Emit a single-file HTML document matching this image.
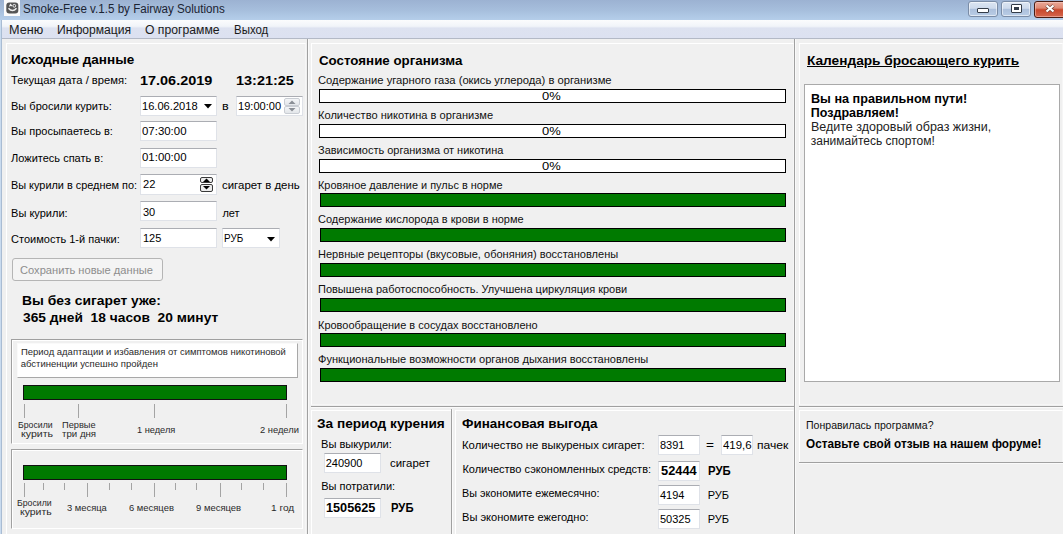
<!DOCTYPE html>
<html><head><meta charset="utf-8"><style>
html,body{margin:0;padding:0;}
body{width:1063px;height:534px;overflow:hidden;position:relative;background:#f0f0f0;font-family:"Liberation Sans",sans-serif;}
</style></head><body>
<div style="position:absolute;left:0;top:0;width:1063px;height:20px;background:linear-gradient(#9cb2d2,#a6bedc 50%,#b5ceea)"></div>
<div style="position:absolute;left:0;top:20px;width:2px;height:514px;background:#c9dbef"></div>
<div style="position:absolute;left:1px;top:20px;width:1px;height:514px;background:#a9bcd3"></div>
<div style="position:absolute;left:4px;top:0px;width:16px;height:16px;background:#fbfbfb"></div>
<svg style="position:absolute;left:6px;top:2px" width="13" height="12" viewBox="0 0 13 12">
<rect x="0.3" y="0.5" width="12" height="11" rx="3" fill="#555"/>
<path d="M2.5 6.2 Q6.5 10.8 10.5 6.2" stroke="#eee" stroke-width="1.5" fill="none"/>
<path d="M3.5 4.5 L4.5 2.5 L6 4" stroke="#eee" stroke-width="1.1" fill="none"/><circle cx="8.3" cy="3.8" r="1.4" fill="none" stroke="#eee" stroke-width="1"/>
</svg>
<div style="position:absolute;left:968px;top:1px;width:30px;height:16px;border:1px solid #7a8ca6;border-radius:3px;background:linear-gradient(#dbe5f2,#cddaec 45%,#acc0dc 52%,#b9cde6 100%);box-sizing:border-box;box-shadow:inset 0 0 0 1px rgba(255,255,255,0.55)"></div>
<div style="position:absolute;left:977px;top:8px;width:12px;height:5px;background:#fff;border:1px solid #333c48;border-radius:1px;box-sizing:border-box"></div>
<div style="position:absolute;left:1001px;top:1px;width:30px;height:16px;border:1px solid #7a8ca6;border-radius:3px;background:linear-gradient(#dbe5f2,#cddaec 45%,#acc0dc 52%,#b9cde6 100%);box-sizing:border-box;box-shadow:inset 0 0 0 1px rgba(255,255,255,0.55)"></div>
<div style="position:absolute;left:1011px;top:4px;width:11px;height:9px;background:#fff;border:1px solid #333c48;border-radius:1px;box-sizing:border-box"></div>
<div style="position:absolute;left:1014px;top:7px;width:5px;height:3px;background:#333c48"></div>
<div style="position:absolute;left:1034px;top:1px;width:40px;height:17px;border:1px solid #4a1c12;border-radius:3px;background:linear-gradient(#eaa898,#df8a74 40%,#c8482c 52%,#d4674e 100%);box-sizing:border-box;box-shadow:inset 0 0 0 1px rgba(255,220,210,0.45)"></div>
<svg style="position:absolute;left:1043px;top:3px" width="14" height="11" viewBox="0 0 14 11"><path d="M3.5 2.5 L10.5 8.5 M10.5 2.5 L3.5 8.5" stroke="#6a3a30" stroke-width="3.6"/><path d="M3.5 2.5 L10.5 8.5 M10.5 2.5 L3.5 8.5" stroke="#fff" stroke-width="2.3"/></svg>

<div style="position:absolute;left:2px;top:20px;width:1061px;height:18px;background:linear-gradient(#fbfcfd 0%,#f1f4f9 35%,#dde2f0 45%,#dce1f1 100%)"></div>
<div style="position:absolute;left:2px;top:38px;width:1061px;height:1px;background:#b3b9c6"></div>
<div style="position:absolute;left:6px;top:43px;width:300px;height:495px;border-top:1px solid #fff;border-left:1px solid #fff;border-right:1px solid #f6f6f6;border-bottom:1px solid #f6f6f6;box-sizing:border-box;background:#f0f0f0"></div>
<div style="position:absolute;left:311px;top:43px;width:483px;height:362px;border-top:1px solid #fff;border-left:1px solid #fff;border-right:1px solid #f6f6f6;border-bottom:1px solid #f6f6f6;box-sizing:border-box;background:#f0f0f0"></div>
<div style="position:absolute;left:311px;top:410px;width:141px;height:130px;border-top:1px solid #fff;border-left:1px solid #fff;border-right:1px solid #f6f6f6;border-bottom:1px solid #f6f6f6;box-sizing:border-box;background:#f0f0f0"></div>
<div style="position:absolute;left:455px;top:410px;width:339px;height:130px;border-top:1px solid #fff;border-left:1px solid #fff;border-right:1px solid #f6f6f6;border-bottom:1px solid #f6f6f6;box-sizing:border-box;background:#f0f0f0"></div>
<div style="position:absolute;left:799px;top:43px;width:264px;height:362px;border-top:1px solid #fff;border-left:1px solid #fff;border-right:1px solid #f6f6f6;border-bottom:1px solid #f6f6f6;box-sizing:border-box;background:#f0f0f0"></div>
<div style="position:absolute;left:799px;top:410px;width:264px;height:54px;border-top:1px solid #fff;border-left:1px solid #fff;border-right:1px solid #f6f6f6;border-bottom:1px solid #f6f6f6;box-sizing:border-box;background:#f0f0f0"></div>
<div style="position:absolute;left:799px;top:462px;width:264px;height:1px;background:#a0a0a0;box-shadow:0 1px #fafafa"></div>
<div style="position:absolute;left:307px;top:39px;width:1px;height:495px;background:#a0a0a0;box-shadow:1px 0 #fafafa"></div>
<div style="position:absolute;left:794px;top:39px;width:1px;height:495px;background:#a0a0a0;box-shadow:1px 0 #fafafa"></div>
<div style="position:absolute;left:311px;top:406px;width:483px;height:1px;background:#a0a0a0;box-shadow:0 1px #fafafa"></div>
<div style="position:absolute;left:799px;top:406px;width:264px;height:1px;background:#a0a0a0;box-shadow:0 1px #fafafa"></div>
<div style="position:absolute;left:451px;top:409px;width:1px;height:125px;background:#a0a0a0;box-shadow:1px 0 #fafafa"></div>
<div style="position:absolute;left:140px;top:96px;width:77px;height:20px;background:#fff;border:1px solid #dfe2e8;border-top-color:#abadb3;box-sizing:border-box"></div>
<svg style="position:absolute;left:204px;top:104px" width="9" height="5"><path d="M0 0 H8 L4 4.5 Z" fill="#000"/></svg>
<div style="position:absolute;left:236px;top:96px;width:67px;height:20px;background:#fff;border:1px solid #dfe2e8;border-top-color:#abadb3;box-sizing:border-box"></div>
<div style="position:absolute;left:284px;top:98px;width:16px;height:8px;border:1px solid #c9cdd3;box-sizing:border-box;background:linear-gradient(#f4f5f7,#e3e6ea);border-radius:2px"></div>
<div style="position:absolute;left:284px;top:106px;width:16px;height:8px;border:1px solid #c9cdd3;box-sizing:border-box;background:linear-gradient(#f4f5f7,#e3e6ea);border-radius:2px"></div>
<svg style="position:absolute;left:288px;top:99px" width="8" height="14"><path d="M0.5 5 L4 1.5 L7.5 5Z" fill="#8a8f96"/><path d="M0.5 9 L4 12.5 L7.5 9Z" fill="#8a8f96"/></svg>
<div style="position:absolute;left:140px;top:121px;width:77px;height:20px;background:#fff;border:1px solid #dfe2e8;border-top-color:#abadb3;box-sizing:border-box"></div>
<div style="position:absolute;left:140px;top:148px;width:77px;height:20px;background:#fff;border:1px solid #dfe2e8;border-top-color:#abadb3;box-sizing:border-box"></div>
<div style="position:absolute;left:140px;top:174px;width:77px;height:21px;background:#fff;border:1px solid #dfe2e8;border-top-color:#abadb3;box-sizing:border-box"></div>
<div style="position:absolute;left:200px;top:177px;width:13px;height:6px;border:1px solid #3a3a3a;box-sizing:border-box;border-radius:2px;background:#ececec"></div>
<div style="position:absolute;left:200px;top:184px;width:13px;height:8px;border:1px solid #3a3a3a;box-sizing:border-box;border-radius:2px;background:#ececec"></div>
<svg style="position:absolute;left:201px;top:177px" width="11" height="15"><path d="M2 5 L5.5 1.5 L9 5Z" fill="#000"/><path d="M2 9 L5.5 12.5 L9 9Z" fill="#000"/></svg>
<div style="position:absolute;left:140px;top:201px;width:77px;height:20px;background:#fff;border:1px solid #dfe2e8;border-top-color:#abadb3;box-sizing:border-box"></div>
<div style="position:absolute;left:140px;top:228px;width:77px;height:20px;background:#fff;border:1px solid #dfe2e8;border-top-color:#abadb3;box-sizing:border-box"></div>
<div style="position:absolute;left:222px;top:228px;width:58px;height:20px;background:#fff;border:1px solid #dfe2e8;border-top-color:#abadb3;box-sizing:border-box"></div>
<svg style="position:absolute;left:267px;top:237px" width="9" height="5"><path d="M0 0 H8 L4 4.5 Z" fill="#000"/></svg>
<div style="position:absolute;left:12px;top:258px;width:151px;height:23px;border:1px solid #b5b5b5;border-radius:3px;box-sizing:border-box;background:#f4f4f4"></div>
<div style="position:absolute;left:11px;top:339px;width:292px;height:105px;border:1px solid #a0a0a0;border-right-color:#fff;border-bottom-color:#fff;box-sizing:border-box;box-shadow:inset 1px 1px #fff"></div>
<div style="position:absolute;left:17px;top:343px;width:281px;height:35px;background:#fff;border:1px solid #a8a8a8;border-left-color:#fafafa;border-top-color:#fafafa;box-sizing:border-box"></div>
<div style="position:absolute;left:23px;top:385px;width:264px;height:15px;background:#007a00;border:1px solid #111;box-sizing:border-box"></div>
<div style="position:absolute;left:24px;top:404px;width:1px;height:14px;background:#a4a4a4"></div>
<div style="position:absolute;left:78px;top:404px;width:1px;height:14px;background:#a4a4a4"></div>
<div style="position:absolute;left:154px;top:404px;width:1px;height:14px;background:#a4a4a4"></div>
<div style="position:absolute;left:286px;top:404px;width:1px;height:14px;background:#a4a4a4"></div>
<div style="position:absolute;left:11px;top:449px;width:292px;height:80px;border:1px solid #a0a0a0;border-right-color:#fff;border-bottom-color:#fff;box-sizing:border-box;box-shadow:inset 1px 1px #fff"></div>
<div style="position:absolute;left:23px;top:465px;width:264px;height:15px;background:#007a00;border:1px solid #111;box-sizing:border-box"></div>
<div style="position:absolute;left:24px;top:483px;width:1px;height:14px;background:#a4a4a4"></div>
<div style="position:absolute;left:87px;top:483px;width:1px;height:14px;background:#a4a4a4"></div>
<div style="position:absolute;left:154px;top:483px;width:1px;height:14px;background:#a4a4a4"></div>
<div style="position:absolute;left:220px;top:483px;width:1px;height:14px;background:#a4a4a4"></div>
<div style="position:absolute;left:286px;top:483px;width:1px;height:14px;background:#a4a4a4"></div>
<div style="position:absolute;left:43px;top:483px;width:1px;height:7px;background:#a4a4a4"></div>
<div style="position:absolute;left:64px;top:483px;width:1px;height:7px;background:#a4a4a4"></div>
<div style="position:absolute;left:109px;top:483px;width:1px;height:7px;background:#a4a4a4"></div>
<div style="position:absolute;left:131px;top:483px;width:1px;height:7px;background:#a4a4a4"></div>
<div style="position:absolute;left:175px;top:483px;width:1px;height:7px;background:#a4a4a4"></div>
<div style="position:absolute;left:196px;top:483px;width:1px;height:7px;background:#a4a4a4"></div>
<div style="position:absolute;left:241px;top:483px;width:1px;height:7px;background:#a4a4a4"></div>
<div style="position:absolute;left:263px;top:483px;width:1px;height:7px;background:#a4a4a4"></div>
<div style="position:absolute;left:319px;top:89px;width:467px;height:14px;background:#fff;border:1px solid #000;box-sizing:border-box"></div>
<div style="position:absolute;left:319px;top:124px;width:467px;height:14px;background:#fff;border:1px solid #000;box-sizing:border-box"></div>
<div style="position:absolute;left:319px;top:159px;width:467px;height:14px;background:#fff;border:1px solid #000;box-sizing:border-box"></div>
<div style="position:absolute;left:320px;top:193px;width:466px;height:14px;background:#007a00;border:1px solid #000;box-sizing:border-box"></div>
<div style="position:absolute;left:320px;top:228px;width:466px;height:14px;background:#007a00;border:1px solid #000;box-sizing:border-box"></div>
<div style="position:absolute;left:320px;top:263px;width:466px;height:14px;background:#007a00;border:1px solid #000;box-sizing:border-box"></div>
<div style="position:absolute;left:320px;top:298px;width:466px;height:14px;background:#007a00;border:1px solid #000;box-sizing:border-box"></div>
<div style="position:absolute;left:320px;top:333px;width:466px;height:14px;background:#007a00;border:1px solid #000;box-sizing:border-box"></div>
<div style="position:absolute;left:320px;top:368px;width:466px;height:14px;background:#007a00;border:1px solid #000;box-sizing:border-box"></div>
<div style="position:absolute;left:324px;top:453px;width:57px;height:20px;background:#fff;border:1px solid #dfe2e8;border-top-color:#abadb3;box-sizing:border-box"></div>
<div style="position:absolute;left:324px;top:498px;width:57px;height:20px;background:#fff;border:1px solid #dfe2e8;border-top-color:#abadb3;box-sizing:border-box"></div>
<div style="position:absolute;left:658px;top:435px;width:42px;height:20px;background:#fff;border:1px solid #dfe2e8;border-top-color:#abadb3;box-sizing:border-box"></div>
<div style="position:absolute;left:721px;top:435px;width:32px;height:20px;background:#fff;border:1px solid #dfe2e8;border-top-color:#abadb3;box-sizing:border-box"></div>
<div style="position:absolute;left:658px;top:461px;width:42px;height:20px;background:#fff;border:1px solid #dfe2e8;border-top-color:#abadb3;box-sizing:border-box"></div>
<div style="position:absolute;left:658px;top:485px;width:42px;height:20px;background:#fff;border:1px solid #dfe2e8;border-top-color:#abadb3;box-sizing:border-box"></div>
<div style="position:absolute;left:658px;top:509px;width:42px;height:20px;background:#fff;border:1px solid #dfe2e8;border-top-color:#abadb3;box-sizing:border-box"></div>
<div style="position:absolute;left:804px;top:84px;width:256px;height:298px;background:#fff;border:1px solid #a9a9a9;box-sizing:border-box"></div>
<span id="t0" style="position:absolute;left:23.4px;top:3.00px;font-size:12px;line-height:12px;font-weight:normal;color:#1b2433;white-space:nowrap;transform:scaleX(0.9677);transform-origin:0 0;">Smoke-Free v.1.5 by Fairway Solutions</span>
<span id="t1" style="position:absolute;left:9.2px;top:24.00px;font-size:12px;line-height:12px;font-weight:normal;color:#1a1a1a;white-space:nowrap;transform:scaleX(1.0543);transform-origin:0 0;">Меню</span>
<span id="t2" style="position:absolute;left:56.9px;top:24.00px;font-size:12px;line-height:12px;font-weight:normal;color:#1a1a1a;white-space:nowrap;transform:scaleX(1.0084);transform-origin:0 0;">Информация</span>
<span id="t3" style="position:absolute;left:145.4px;top:24.00px;font-size:12px;line-height:12px;font-weight:normal;color:#1a1a1a;white-space:nowrap;transform:scaleX(1.0160);transform-origin:0 0;">О программе</span>
<span id="t4" style="position:absolute;left:234.0px;top:24.00px;font-size:12px;line-height:12px;font-weight:normal;color:#1a1a1a;white-space:nowrap;transform:scaleX(0.9553);transform-origin:0 0;">Выход</span>
<span id="t5" style="position:absolute;left:11.4px;top:53.00px;font-size:13px;line-height:13px;font-weight:bold;color:#000;white-space:nowrap;transform:scaleX(1.0383);transform-origin:0 0;">Исходные данные</span>
<span id="t6" style="position:absolute;left:11.4px;top:75.00px;font-size:11px;line-height:11px;font-weight:normal;color:#000;white-space:nowrap;transform:scaleX(1.0193);transform-origin:0 0;">Текущая дата / время:</span>
<span id="t7" style="position:absolute;left:139.9px;top:74.00px;font-size:13px;line-height:13px;font-weight:bold;color:#000;white-space:nowrap;transform:scaleX(1.1110);transform-origin:0 0;">17.06.2019</span>
<span id="t8" style="position:absolute;left:236.3px;top:74.00px;font-size:13px;line-height:13px;font-weight:bold;color:#000;white-space:nowrap;transform:scaleX(1.1125);transform-origin:0 0;">13:21:25</span>
<span id="t9" style="position:absolute;left:11.4px;top:101.00px;font-size:11px;line-height:11px;font-weight:normal;color:#000;white-space:nowrap;transform:scaleX(1.0040);transform-origin:0 0;">Вы бросили курить:</span>
<span id="t10" style="position:absolute;left:142.4px;top:101.00px;font-size:11px;line-height:11px;font-weight:normal;color:#000;white-space:nowrap;transform:scaleX(1.0098);transform-origin:0 0;">16.06.2018</span>
<span id="t11" style="position:absolute;left:221.9px;top:101.00px;font-size:11px;line-height:11px;font-weight:normal;color:#000;white-space:nowrap;transform:scaleX(1.1465);transform-origin:0 0;">в</span>
<span id="t12" style="position:absolute;left:238.3px;top:101.00px;font-size:11px;line-height:11px;font-weight:normal;color:#000;white-space:nowrap;transform:scaleX(1.0063);transform-origin:0 0;">19:00:00</span>
<span id="t13" style="position:absolute;left:11.1px;top:126.00px;font-size:11px;line-height:11px;font-weight:normal;color:#000;white-space:nowrap;transform:scaleX(0.9985);transform-origin:0 0;">Вы просыпаетесь в:</span>
<span id="t14" style="position:absolute;left:142.1px;top:126.00px;font-size:11px;line-height:11px;font-weight:normal;color:#000;white-space:nowrap;transform:scaleX(1.0390);transform-origin:0 0;">07:30:00</span>
<span id="t15" style="position:absolute;left:11.1px;top:153.00px;font-size:11px;line-height:11px;font-weight:normal;color:#000;white-space:nowrap;">Ложитесь спать в:</span>
<span id="t16" style="position:absolute;left:142.1px;top:152.00px;font-size:11px;line-height:11px;font-weight:normal;color:#000;white-space:nowrap;transform:scaleX(1.0390);transform-origin:0 0;">01:00:00</span>
<span id="t17" style="position:absolute;left:11.1px;top:180.00px;font-size:11px;line-height:11px;font-weight:normal;color:#000;white-space:nowrap;transform:scaleX(0.9902);transform-origin:0 0;">Вы курили в среднем по:</span>
<span id="t18" style="position:absolute;left:142.9px;top:179.00px;font-size:11px;line-height:11px;font-weight:normal;color:#000;white-space:nowrap;transform:scaleX(1.0122);transform-origin:0 0;">22</span>
<span id="t19" style="position:absolute;left:222.4px;top:180.00px;font-size:11px;line-height:11px;font-weight:normal;color:#000;white-space:nowrap;transform:scaleX(1.0395);transform-origin:0 0;">сигарет в день</span>
<span id="t20" style="position:absolute;left:11.1px;top:208.00px;font-size:11px;line-height:11px;font-weight:normal;color:#000;white-space:nowrap;">Вы курили:</span>
<span id="t21" style="position:absolute;left:142.9px;top:207.00px;font-size:11px;line-height:11px;font-weight:normal;color:#000;white-space:nowrap;">30</span>
<span id="t22" style="position:absolute;left:222.4px;top:208.00px;font-size:11px;line-height:11px;font-weight:normal;color:#000;white-space:nowrap;">лет</span>
<span id="t23" style="position:absolute;left:11.1px;top:234.00px;font-size:11px;line-height:11px;font-weight:normal;color:#000;white-space:nowrap;">Стоимость 1-й пачки:</span>
<span id="t24" style="position:absolute;left:142.9px;top:233.00px;font-size:11px;line-height:11px;font-weight:normal;color:#000;white-space:nowrap;">125</span>
<span id="t25" style="position:absolute;left:224.4px;top:233.00px;font-size:11px;line-height:11px;font-weight:normal;color:#000;white-space:nowrap;transform:scaleX(0.9009);transform-origin:0 0;">РУБ</span>
<span id="t26" style="position:absolute;left:19.8px;top:265.00px;font-size:11px;line-height:11px;font-weight:normal;color:#8d8d8d;white-space:nowrap;transform:scaleX(1.0110);transform-origin:0 0;">Сохранить новые данные</span>
<span id="t27" style="position:absolute;left:22.1px;top:294.00px;font-size:13px;line-height:13px;font-weight:bold;color:#000;white-space:nowrap;transform:scaleX(1.0662);transform-origin:0 0;">Вы без сигарет уже:</span>
<span id="t28" style="position:absolute;left:22.7px;top:311.00px;font-size:13px;line-height:13px;font-weight:bold;color:#000;white-space:nowrap;transform:scaleX(1.0587);transform-origin:0 0;">365 дней&nbsp; 18 часов&nbsp; 20 минут</span>
<span id="t29" style="position:absolute;left:20.7px;top:347.00px;font-size:9.5px;line-height:9.5px;font-weight:normal;color:#2a2a2a;white-space:nowrap;transform:scaleX(0.9963);transform-origin:0 0;">Период адаптации и избавления от симптомов никотиновой</span>
<span id="t30" style="position:absolute;left:20.7px;top:359.00px;font-size:9.5px;line-height:9.5px;font-weight:normal;color:#2a2a2a;white-space:nowrap;">абстиненции успешно пройден</span>
<span id="t31" style="position:absolute;left:17.9px;top:420.00px;font-size:9.5px;line-height:9.5px;font-weight:normal;color:#2a2a2a;white-space:nowrap;transform:scaleX(0.9173);transform-origin:0 0;">Бросили</span>
<span id="t32" style="position:absolute;left:20.5px;top:429.00px;font-size:9.5px;line-height:9.5px;font-weight:normal;color:#2a2a2a;white-space:nowrap;transform:scaleX(1.1112);transform-origin:0 0;">курить</span>
<span id="t33" style="position:absolute;left:62.1px;top:420.00px;font-size:9.5px;line-height:9.5px;font-weight:normal;color:#2a2a2a;white-space:nowrap;transform:scaleX(0.9722);transform-origin:0 0;">Первые</span>
<span id="t34" style="position:absolute;left:61.6px;top:429.00px;font-size:9.5px;line-height:9.5px;font-weight:normal;color:#2a2a2a;white-space:nowrap;transform:scaleX(1.0174);transform-origin:0 0;">три дня</span>
<span id="t35" style="position:absolute;left:136.9px;top:425.00px;font-size:9.5px;line-height:9.5px;font-weight:normal;color:#2a2a2a;white-space:nowrap;transform:scaleX(0.9708);transform-origin:0 0;">1 неделя</span>
<span id="t36" style="position:absolute;left:259.7px;top:425.00px;font-size:9.5px;line-height:9.5px;font-weight:normal;color:#2a2a2a;white-space:nowrap;transform:scaleX(0.9821);transform-origin:0 0;">2 недели</span>
<span id="t37" style="position:absolute;left:16.9px;top:498.00px;font-size:9.5px;line-height:9.5px;font-weight:normal;color:#2a2a2a;white-space:nowrap;transform:scaleX(0.9200);transform-origin:0 0;">Бросили</span>
<span id="t38" style="position:absolute;left:19.9px;top:507.00px;font-size:9.5px;line-height:9.5px;font-weight:normal;color:#2a2a2a;white-space:nowrap;transform:scaleX(1.1008);transform-origin:0 0;">курить</span>
<span id="t39" style="position:absolute;left:66.6px;top:503.00px;font-size:9.5px;line-height:9.5px;font-weight:normal;color:#2a2a2a;white-space:nowrap;transform:scaleX(0.9861);transform-origin:0 0;">3 месяца</span>
<span id="t40" style="position:absolute;left:129.4px;top:503.00px;font-size:9.5px;line-height:9.5px;font-weight:normal;color:#2a2a2a;white-space:nowrap;transform:scaleX(0.9912);transform-origin:0 0;">6 месяцев</span>
<span id="t41" style="position:absolute;left:196.1px;top:503.00px;font-size:9.5px;line-height:9.5px;font-weight:normal;color:#2a2a2a;white-space:nowrap;transform:scaleX(0.9957);transform-origin:0 0;">9 месяцев</span>
<span id="t42" style="position:absolute;left:271.4px;top:503.00px;font-size:9.5px;line-height:9.5px;font-weight:normal;color:#2a2a2a;white-space:nowrap;transform:scaleX(1.0636);transform-origin:0 0;">1 год</span>
<span id="t43" style="position:absolute;left:318.5px;top:54.00px;font-size:13px;line-height:13px;font-weight:bold;color:#000;white-space:nowrap;transform:scaleX(1.0249);transform-origin:0 0;">Состояние организма</span>
<span id="t44" style="position:absolute;left:318.4px;top:75.00px;font-size:11px;line-height:11px;font-weight:normal;color:#111;white-space:nowrap;transform:scaleX(1.0194);transform-origin:0 0;">Содержание угарного газа (окись углерода) в организме</span>
<span id="t45" style="position:absolute;left:541.7px;top:91.00px;font-size:11.5px;line-height:11.5px;font-weight:normal;color:#000;white-space:nowrap;transform:scaleX(1.1248);transform-origin:0 0;">0%</span>
<span id="t46" style="position:absolute;left:318.4px;top:110.00px;font-size:11px;line-height:11px;font-weight:normal;color:#111;white-space:nowrap;transform:scaleX(1.0089);transform-origin:0 0;">Количество никотина в организме</span>
<span id="t47" style="position:absolute;left:541.7px;top:126.00px;font-size:11.5px;line-height:11.5px;font-weight:normal;color:#000;white-space:nowrap;transform:scaleX(1.1248);transform-origin:0 0;">0%</span>
<span id="t48" style="position:absolute;left:318.4px;top:145.00px;font-size:11px;line-height:11px;font-weight:normal;color:#111;white-space:nowrap;transform:scaleX(0.9973);transform-origin:0 0;">Зависимость организма от никотина</span>
<span id="t49" style="position:absolute;left:541.7px;top:161.00px;font-size:11.5px;line-height:11.5px;font-weight:normal;color:#000;white-space:nowrap;transform:scaleX(1.1248);transform-origin:0 0;">0%</span>
<span id="t50" style="position:absolute;left:318.4px;top:180.00px;font-size:11px;line-height:11px;font-weight:normal;color:#111;white-space:nowrap;transform:scaleX(0.9932);transform-origin:0 0;">Кровяное давление и пульс в норме</span>
<span id="t51" style="position:absolute;left:318.4px;top:214.00px;font-size:11px;line-height:11px;font-weight:normal;color:#111;white-space:nowrap;transform:scaleX(0.9984);transform-origin:0 0;">Содержание кислорода в крови в норме</span>
<span id="t52" style="position:absolute;left:318.4px;top:249.00px;font-size:11px;line-height:11px;font-weight:normal;color:#111;white-space:nowrap;transform:scaleX(1.0042);transform-origin:0 0;">Нервные рецепторы (вкусовые, обоняния) восстановлены</span>
<span id="t53" style="position:absolute;left:318.4px;top:284.00px;font-size:11px;line-height:11px;font-weight:normal;color:#111;white-space:nowrap;transform:scaleX(0.9996);transform-origin:0 0;">Повышена работоспособность. Улучшена циркуляция крови</span>
<span id="t54" style="position:absolute;left:318.4px;top:320.00px;font-size:11px;line-height:11px;font-weight:normal;color:#111;white-space:nowrap;transform:scaleX(0.9971);transform-origin:0 0;">Кровообращение в сосудах восстановлено</span>
<span id="t55" style="position:absolute;left:318.4px;top:354.00px;font-size:11px;line-height:11px;font-weight:normal;color:#111;white-space:nowrap;transform:scaleX(1.0041);transform-origin:0 0;">Функциональные возможности органов дыхания восстановлены</span>
<span id="t56" style="position:absolute;left:317.3px;top:417.00px;font-size:13px;line-height:13px;font-weight:bold;color:#000;white-space:nowrap;transform:scaleX(1.0492);transform-origin:0 0;">За период курения</span>
<span id="t57" style="position:absolute;left:321.2px;top:439.00px;font-size:11px;line-height:11px;font-weight:normal;color:#000;white-space:nowrap;transform:scaleX(1.0093);transform-origin:0 0;">Вы выкурили:</span>
<span id="t58" style="position:absolute;left:325.7px;top:458.00px;font-size:11px;line-height:11px;font-weight:normal;color:#000;white-space:nowrap;">240900</span>
<span id="t59" style="position:absolute;left:390.2px;top:458.00px;font-size:11px;line-height:11px;font-weight:normal;color:#000;white-space:nowrap;transform:scaleX(1.0402);transform-origin:0 0;">сигарет</span>
<span id="t60" style="position:absolute;left:321.2px;top:481.00px;font-size:11px;line-height:11px;font-weight:normal;color:#000;white-space:nowrap;">Вы потратили:</span>
<span id="t61" style="position:absolute;left:325.7px;top:502.00px;font-size:12px;line-height:12px;font-weight:bold;color:#000;white-space:nowrap;transform:scaleX(1.0574);transform-origin:0 0;">1505625</span>
<span id="t62" style="position:absolute;left:390.9px;top:502.00px;font-size:12px;line-height:12px;font-weight:bold;color:#000;white-space:nowrap;transform:scaleX(0.9399);transform-origin:0 0;">РУБ</span>
<span id="t63" style="position:absolute;left:462.4px;top:417.00px;font-size:13px;line-height:13px;font-weight:bold;color:#000;white-space:nowrap;transform:scaleX(1.0341);transform-origin:0 0;">Финансовая выгода</span>
<span id="t64" style="position:absolute;left:462.4px;top:440.00px;font-size:11px;line-height:11px;font-weight:normal;color:#000;white-space:nowrap;transform:scaleX(1.0280);transform-origin:0 0;">Количество не выкуреных сигарет:</span>
<span id="t65" style="position:absolute;left:462.4px;top:464.00px;font-size:11px;line-height:11px;font-weight:normal;color:#000;white-space:nowrap;">Количество сэкономленных средств:</span>
<span id="t66" style="position:absolute;left:462.4px;top:488.00px;font-size:11px;line-height:11px;font-weight:normal;color:#000;white-space:nowrap;transform:scaleX(0.9783);transform-origin:0 0;">Вы экономите ежемесячно:</span>
<span id="t67" style="position:absolute;left:462.4px;top:512.00px;font-size:11px;line-height:11px;font-weight:normal;color:#000;white-space:nowrap;transform:scaleX(1.0076);transform-origin:0 0;">Вы экономите ежегодно:</span>
<span id="t68" style="position:absolute;left:660.0px;top:440.00px;font-size:11px;line-height:11px;font-weight:normal;color:#000;white-space:nowrap;">8391</span>
<span id="t69" style="position:absolute;left:705.9px;top:440.00px;font-size:11px;line-height:11px;font-weight:normal;color:#000;white-space:nowrap;transform:scaleX(1.2427);transform-origin:0 0;">=</span>
<span id="t70" style="position:absolute;left:723.0px;top:440.00px;font-size:11px;line-height:11px;font-weight:normal;color:#000;white-space:nowrap;transform:scaleX(1.0388);transform-origin:0 0;">419,6</span>
<span id="t71" style="position:absolute;left:757.4px;top:440.00px;font-size:11px;line-height:11px;font-weight:normal;color:#000;white-space:nowrap;transform:scaleX(1.1018);transform-origin:0 0;">пачек</span>
<span id="t72" style="position:absolute;left:660.7px;top:465.00px;font-size:12px;line-height:12px;font-weight:bold;color:#000;white-space:nowrap;transform:scaleX(1.0697);transform-origin:0 0;">52444</span>
<span id="t73" style="position:absolute;left:707.7px;top:465.00px;font-size:12px;line-height:12px;font-weight:bold;color:#000;white-space:nowrap;transform:scaleX(0.9441);transform-origin:0 0;">РУБ</span>
<span id="t74" style="position:absolute;left:660.0px;top:490.00px;font-size:11px;line-height:11px;font-weight:normal;color:#000;white-space:nowrap;">4194</span>
<span id="t75" style="position:absolute;left:707.7px;top:490.00px;font-size:11px;line-height:11px;font-weight:normal;color:#000;white-space:nowrap;">РУБ</span>
<span id="t76" style="position:absolute;left:660.0px;top:514.00px;font-size:11px;line-height:11px;font-weight:normal;color:#000;white-space:nowrap;">50325</span>
<span id="t77" style="position:absolute;left:707.7px;top:514.00px;font-size:11px;line-height:11px;font-weight:normal;color:#000;white-space:nowrap;">РУБ</span>
<span id="t78" style="position:absolute;left:806.5px;top:54.00px;font-size:13px;line-height:13px;font-weight:bold;color:#000;white-space:nowrap;transform:scaleX(1.0513);transform-origin:0 0;text-decoration:underline;">Календарь бросающего курить</span>
<span id="t79" style="position:absolute;left:810.8px;top:93.00px;font-size:12.5px;line-height:12.5px;font-weight:bold;color:#000;white-space:nowrap;transform:scaleX(1.0106);transform-origin:0 0;">Вы на правильном пути!</span>
<span id="t80" style="position:absolute;left:810.8px;top:107.00px;font-size:12.5px;line-height:12.5px;font-weight:bold;color:#000;white-space:nowrap;">Поздравляем!</span>
<span id="t81" style="position:absolute;left:810.8px;top:121.00px;font-size:12px;line-height:12px;font-weight:normal;color:#222;white-space:nowrap;transform:scaleX(1.0399);transform-origin:0 0;">Ведите здоровый образ жизни,</span>
<span id="t82" style="position:absolute;left:810.8px;top:135.00px;font-size:12px;line-height:12px;font-weight:normal;color:#222;white-space:nowrap;">занимайтесь спортом!</span>
<span id="t83" style="position:absolute;left:805.9px;top:420.00px;font-size:11px;line-height:11px;font-weight:normal;color:#111;white-space:nowrap;transform:scaleX(0.9590);transform-origin:0 0;">Понравилась программа?</span>
<span id="t84" style="position:absolute;left:805.9px;top:438.00px;font-size:12px;line-height:12px;font-weight:bold;color:#000;white-space:nowrap;transform:scaleX(0.9783);transform-origin:0 0;">Оставьте свой отзыв на нашем форуме!</span>
</body></html>
